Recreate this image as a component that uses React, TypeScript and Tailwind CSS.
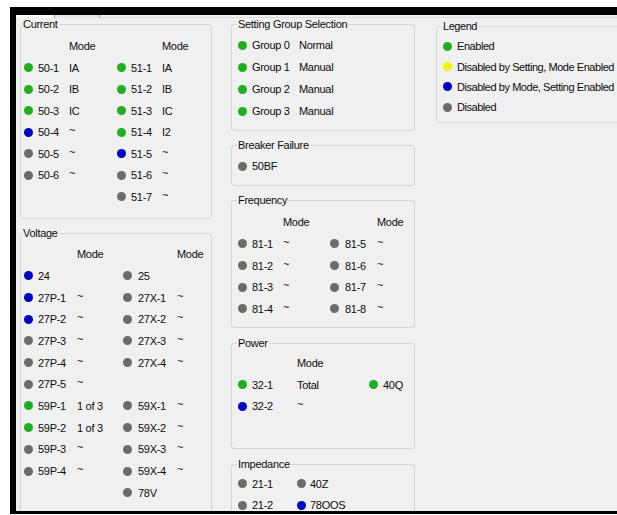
type LampState = 'on' | 'setting' | 'mode' | 'off';
type Cell = { l: LampState } | string | null;

const ON = { l: 'on' } as const;
const MODE = { l: 'mode' } as const;
const SET = { l: 'setting' } as const;
const OFF = { l: 'off' } as const;

const lampColor: Record<LampState, string> = {
  on: 'bg-[#1fae1f]',
  setting: 'bg-[#f4f400]',
  mode: 'bg-[#0000c4]',
  off: 'bg-[#6b6b6b]',
};

function Lamp({ state }: { state: LampState }) {
  return <span className={`block w-[9px] h-[9px] rounded-full ${lampColor[state]}`} />;
}

function Row({ cells, className }: { cells: Cell[]; className: string }) {
  return (
    <div className={`grid items-center ${className}`}>
      {cells.map((c, i) => {
        if (c === null) return <div key={i} />;
        if (typeof c === 'string') {
          return (
            <span key={i} className={`whitespace-nowrap leading-[14px] ${c === '~' ? 'relative -top-[2px]' : ''}`}>
              {c}
            </span>
          );
        }
        return <Lamp key={i} state={c.l} />;
      })}
    </div>
  );
}

function Box({
  title,
  className,
  titleClass,
  children,
}: {
  title: string;
  className: string;
  titleClass: string;
  children: React.ReactNode;
}) {
  return (
    <fieldset className={`border border-[#d6d6d6] rounded-[3px] ${className}`}>
      <legend className={`px-[1px] leading-[12px] ${titleClass}`}>{title}</legend>
      {children}
    </fieldset>
  );
}

const current: Cell[][] = [
  [ON, '50-1', 'IA', ON, '51-1', 'IA'],
  [ON, '50-2', 'IB', ON, '51-2', 'IB'],
  [ON, '50-3', 'IC', ON, '51-3', 'IC'],
  [MODE, '50-4', '~', ON, '51-4', 'I2'],
  [OFF, '50-5', '~', MODE, '51-5', '~'],
  [OFF, '50-6', '~', OFF, '51-6', '~'],
  [null, null, null, OFF, '51-7', '~'],
];

const voltage: Cell[][] = [
  [MODE, '24', null, OFF, '25', null],
  [MODE, '27P-1', '~', OFF, '27X-1', '~'],
  [MODE, '27P-2', '~', OFF, '27X-2', '~'],
  [OFF, '27P-3', '~', OFF, '27X-3', '~'],
  [OFF, '27P-4', '~', OFF, '27X-4', '~'],
  [OFF, '27P-5', '~', null, null, null],
  [ON, '59P-1', '1 of 3', OFF, '59X-1', '~'],
  [ON, '59P-2', '1 of 3', OFF, '59X-2', '~'],
  [OFF, '59P-3', '~', OFF, '59X-3', '~'],
  [OFF, '59P-4', '~', OFF, '59X-4', '~'],
  [null, null, null, OFF, '78V', null],
];

const groups: Cell[][] = [
  [ON, 'Group 0', 'Normal'],
  [ON, 'Group 1', 'Manual'],
  [ON, 'Group 2', 'Manual'],
  [ON, 'Group 3', 'Manual'],
];

const frequency: Cell[][] = [
  [OFF, '81-1', '~', OFF, '81-5', '~'],
  [OFF, '81-2', '~', OFF, '81-6', '~'],
  [OFF, '81-3', '~', OFF, '81-7', '~'],
  [OFF, '81-4', '~', OFF, '81-8', '~'],
];

const power: Cell[][] = [
  [ON, '32-1', 'Total', ON, '40Q'],
  [MODE, '32-2', '~', null, null],
];

const impedance: Cell[][] = [
  [OFF, '21-1', OFF, '40Z'],
  [OFF, '21-2', MODE, '78OOS'],
];

const legend: Cell[][] = [
  [ON, 'Enabled'],
  [SET, 'Disabled by Setting, Mode Enabled'],
  [MODE, 'Disabled by Mode, Setting Enabled'],
  [OFF, 'Disabled'],
];

export default function App() {
  return (
    <div className="w-[617px] h-[515px] bg-white pt-[7px] pl-[10px] overflow-hidden font-['Liberation_Sans',Arial,sans-serif] text-[11px] tracking-[-0.3px] text-[#0c0c0c]">
      <div className="h-[507px] border-t-[8px] border-l-[6px] border-b-[3px] border-black bg-[#f0f0f0] overflow-hidden">
        {/* tab strip peeking out under the toolbar */}
        <div className="flex h-[3px]">
          <div className="w-[1px]" />
          <div className="w-[38px] bg-[#fbfbfb] border-r border-[#a9a9a9]" />
          <div className="w-[45px] bg-[#e6e6e6] border-r border-[#a9a9a9]" />
          <div className="flex-1 border-b border-[#dadada]" />
        </div>

        <div className="flex">
          {/* left column */}
          <div className="ml-[4px] w-[192px] shrink-0">
            <Box title="Current" className="h-[201px] pt-[4px] pl-[3px]" titleClass="-ml-[2px]">
              <Row className="grid-cols-[14px_31px_48px_14px_31px_1fr] h-[23px]" cells={[null, null, 'Mode', null, null, 'Mode']} />
              {current.map((r, i) => (
                <Row key={i} className="grid-cols-[14px_31px_48px_14px_31px_1fr] h-[21.5px]" cells={r} />
              ))}
            </Box>
            <Box title="Voltage" className="mt-[8px] h-[300px] pt-[4px] pl-[3px]" titleClass="-ml-[2px]">
              <Row className="grid-cols-[14px_39px_46px_15px_39px_1fr] h-[22px]" cells={[null, null, 'Mode', null, null, 'Mode']} />
              {voltage.map((r, i) => (
                <Row key={i} className="grid-cols-[14px_39px_46px_15px_39px_1fr] h-[21.7px]" cells={r} />
              ))}
            </Box>
          </div>

          {/* middle column */}
          <div className="ml-[19px] w-[184px] shrink-0">
            <Box title="Setting Group Selection" className="h-[113px] pt-[4px] pl-[6px]" titleClass="-ml-[1px]">
              {groups.map((r, i) => (
                <Row key={i} className="grid-cols-[14px_47px_1fr] h-[22px]" cells={r} />
              ))}
            </Box>
            <Box title="Breaker Failure" className="mt-[8px] h-[47px] pt-[4px] pl-[6px]" titleClass="-ml-[1px]">
              <Row className="grid-cols-[14px_1fr] h-[22px]" cells={[OFF, '50BF']} />
            </Box>
            <Box title="Frequency" className="mt-[8px] h-[134px] pt-[5px] pl-[6px]" titleClass="-ml-[1px]">
              <Row className="grid-cols-[14px_31px_47px_15px_32px_1fr] h-[22px]" cells={[null, null, 'Mode', null, null, 'Mode']} />
              {frequency.map((r, i) => (
                <Row key={i} className="grid-cols-[14px_31px_47px_15px_32px_1fr] h-[21.7px]" cells={r} />
              ))}
            </Box>
            <Box title="Power" className="mt-[9px] h-[112px] pt-[3px] pl-[6px]" titleClass="-ml-[1px]">
              <Row className="grid-cols-[14px_45px_72px_14px_1fr] h-[22px]" cells={[null, null, 'Mode', null, null]} />
              {power.map((r, i) => (
                <Row key={i} className="grid-cols-[14px_45px_72px_14px_1fr] h-[21.5px]" cells={r} />
              ))}
            </Box>
            <Box title="Impedance" className="mt-[9px] h-[80px] pt-[3px] pl-[6px]" titleClass="-ml-[1px]">
              {impedance.map((r, i) => (
                <Row key={i} className="grid-cols-[14px_45px_13px_1fr] h-[21.5px]" cells={r} />
              ))}
            </Box>
          </div>

          {/* right column */}
          <div className="ml-[21px] w-[200px] shrink-0">
            <Box title="Legend" className="mt-[2px] h-[103px] pt-[4px] pl-[6px] tracking-[-0.45px]" titleClass="-ml-[1px]">
              {legend.map((r, i) => (
                <Row key={i} className="grid-cols-[14px_1fr] h-[20.4px]" cells={r} />
              ))}
            </Box>
          </div>
        </div>
      </div>
    </div>
  );
}
